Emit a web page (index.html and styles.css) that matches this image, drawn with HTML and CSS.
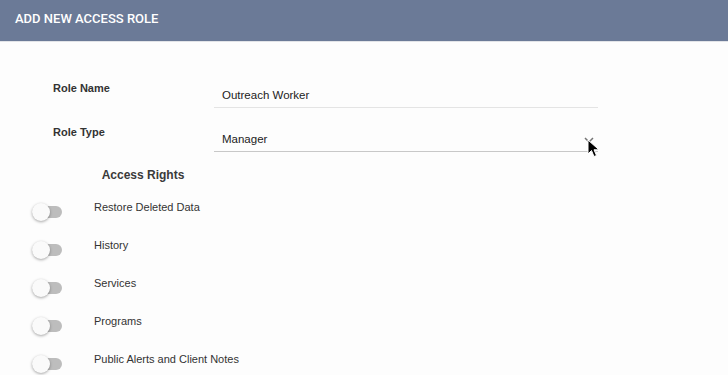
FILE: index.html
```html
<!DOCTYPE html>
<html lang="en">
<head>
    <meta charset="UTF-8">
    <title>Add New Access Role</title>
    <link rel="stylesheet" href="styles.css">
</head>
<body>
    <div class="dialog-header">Add New Access Role</div>

    <div class="dialog-body">
        <div class="form-row">
            <div class="form-label">Role Name</div>
            <div class="form-field">Outreach Worker</div>
        </div>

        <div class="form-row">
            <div class="form-label">Role Type</div>
            <div class="form-field select-field">
                <span>Manager</span>
                <svg class="select-arrow" width="10" height="6" viewBox="0 0 10 6">
                    <path d="M1 1 L5 5 L9 1" fill="none" stroke="#757575" stroke-width="1.5"/>
                </svg>
                <svg class="mouse-cursor" width="14" height="20" viewBox="0 0 14 20">
                    <path d="M1 1 L1 15 L4.5 11.5 L7 17.5 L9.5 16.5 L7 10.8 L12 10.8 Z" fill="#000" stroke="#fff" stroke-width="1"/>
                </svg>
            </div>
        </div>

        <div class="section-title">Access Rights</div>

        <div class="rights-list">
            <div class="right-row">
                <div class="toggle"><div class="toggle-thumb"></div></div>
                <div class="right-name">Restore Deleted Data</div>
            </div>
            <div class="right-row">
                <div class="toggle"><div class="toggle-thumb"></div></div>
                <div class="right-name">History</div>
            </div>
            <div class="right-row">
                <div class="toggle"><div class="toggle-thumb"></div></div>
                <div class="right-name">Services</div>
            </div>
            <div class="right-row">
                <div class="toggle"><div class="toggle-thumb"></div></div>
                <div class="right-name">Programs</div>
            </div>
            <div class="right-row">
                <div class="toggle"><div class="toggle-thumb"></div></div>
                <div class="right-name">Public Alerts and Client Notes</div>
            </div>
        </div>
    </div>
</body>
</html>
```

FILE: styles.css
```css
* {
    margin: 0;
    padding: 0;
    box-sizing: border-box;
    font-family: 'Liberation Sans', Arial, sans-serif;
}

body {
    background-color: #fdfdfd;
    color: #333333;
    width: 728px;
    height: 375px;
    overflow: hidden;
}

.dialog-header {
    height: 42px;
    background-color: #6b7a97;
    color: #ffffff;
    font-family: Roboto, 'Liberation Sans', sans-serif;
    font-size: 13px;
    font-weight: 500;
    text-transform: uppercase;
    padding: 11px 0 0 15px;
    border-bottom: 1px solid #e2e4e8;
}

.dialog-body {
    padding-top: 40px;
}

.form-row {
    display: flex;
    height: 44px;
}

.form-label {
    width: 214px;
    padding-left: 53px;
    font-size: 11px;
    font-weight: 700;
    color: #333333;
}

.form-field {
    position: relative;
    width: 384px;
    height: 26px;
    padding: 7px 0 0 8px;
    font-size: 11.5px;
    color: #222222;
    border-bottom: 1px solid #e4e4e4;
}

.select-field {
    border-bottom-color: #c8c8c8;
}

.select-arrow {
    position: absolute;
    right: 4px;
    top: 11px;
}

.mouse-cursor {
    position: absolute;
    right: -3px;
    top: 13px;
}

.section-title {
    width: 286px;
    height: 33px;
    margin-top: -2px;
    text-align: center;
    font-size: 12px;
    font-weight: 700;
    color: #3a3a3a;
}

.rights-list {
    display: flex;
    flex-direction: column;
}

.right-row {
    display: flex;
    height: 38px;
    padding-left: 32px;
}

.toggle {
    position: relative;
    width: 30px;
    height: 12px;
    margin-top: 5px;
    border-radius: 6px;
    background-color: #bdbdbd;
}

.toggle-thumb {
    position: absolute;
    left: 0;
    top: -3px;
    width: 18px;
    height: 18px;
    border-radius: 50%;
    background-color: #fafafa;
    box-shadow: 0 1px 3px rgba(0, 0, 0, 0.35);
}

.right-name {
    margin-left: 32px;
    font-size: 11px;
    color: #333333;
}
```
